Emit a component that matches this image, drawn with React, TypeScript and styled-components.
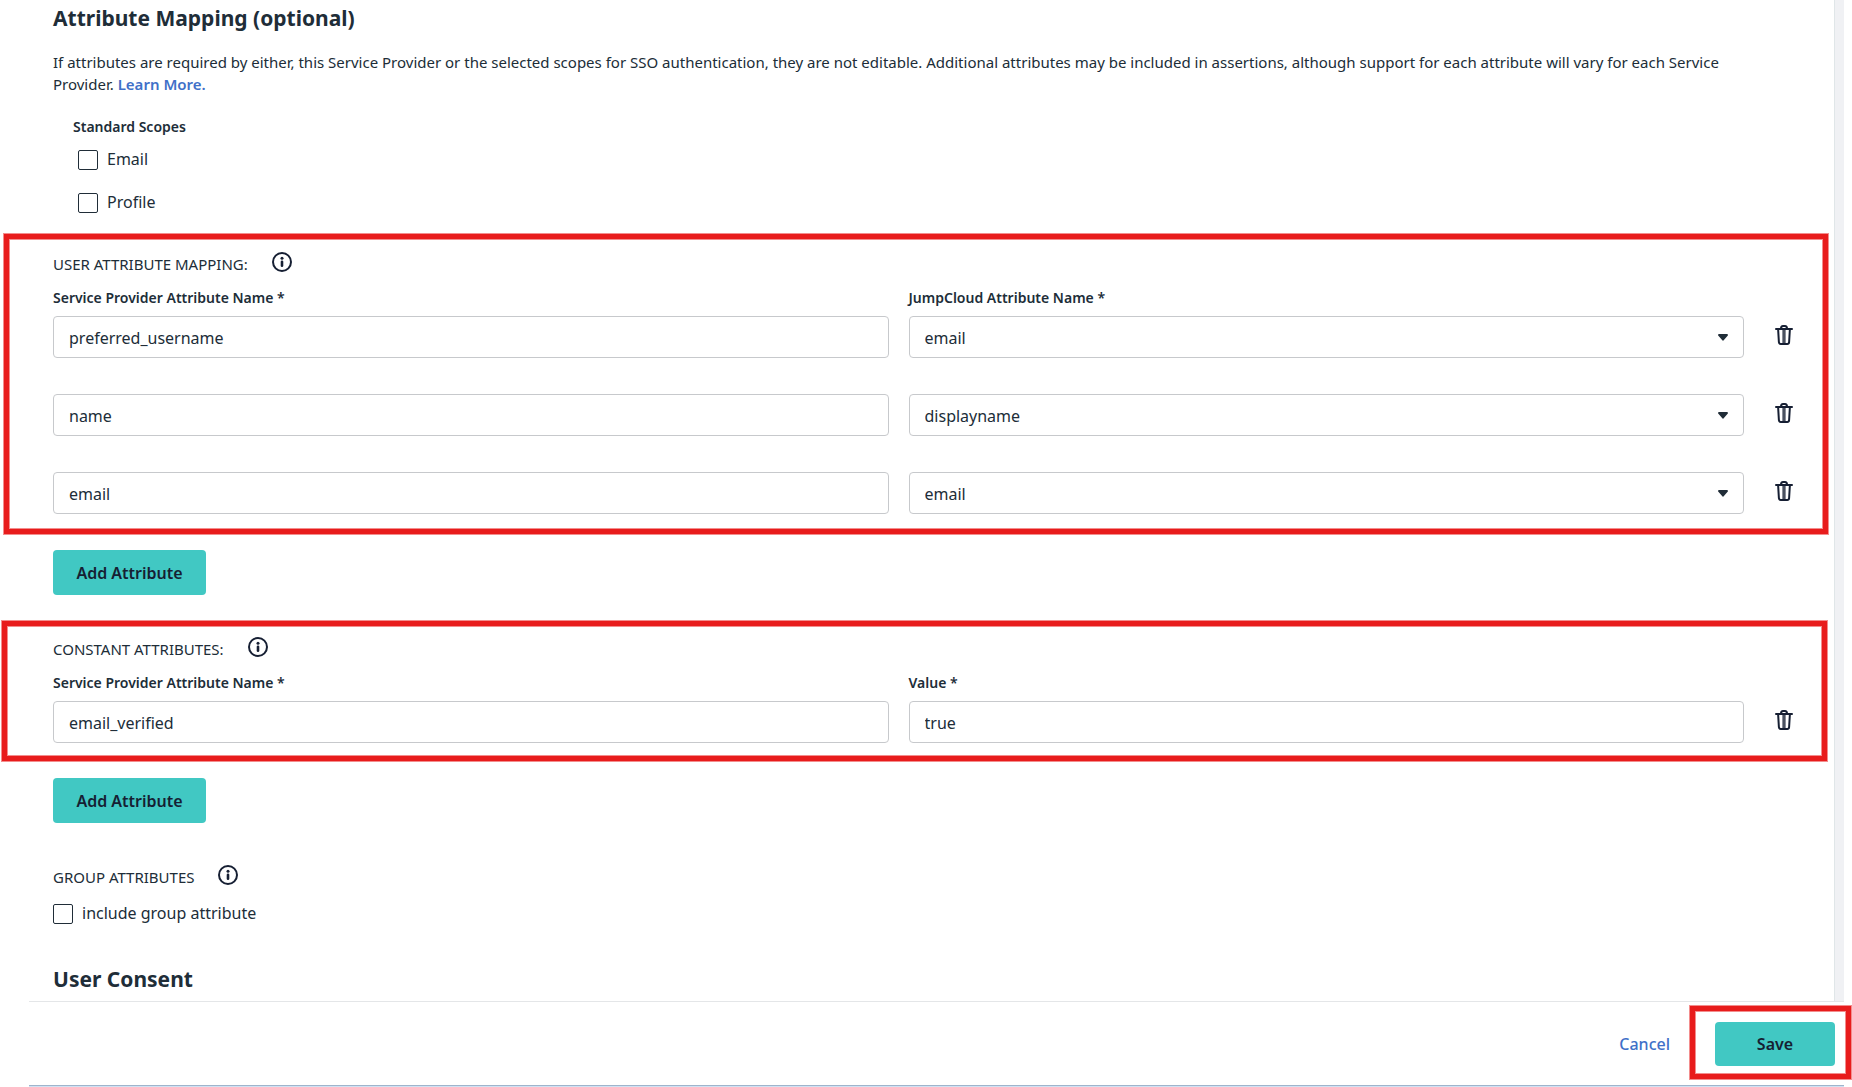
import React, { useId, useState } from "react";
import styled, { createGlobalStyle, css } from "styled-components";

const color = {
  text: "#202d38",
  ink: "#161f33",
  link: "#4070c8",
  teal: "#41c8c3",
  border: "#c7c9cc",
  rule: "#e4e6e8",
  gutter: "#f0f1f4",
  mark: "#e81c1c",
  halo: "rgba(232, 28, 28, 0.5)",
};

const GlobalStyle = createGlobalStyle`
  *, *::before, *::after { box-sizing: border-box; }
  body {
    margin: 0;
    background: #fff;
    color: ${color.text};
    font: 400 15px/22px "Noto Sans", "Open Sans", sans-serif;
  }
  button, input, select { font: inherit; color: inherit; margin: 0; }
`;

const Shell = styled.div`
  display: flex;
  flex-direction: column;
  height: 100vh;
  padding-right: 8px;
  overflow: hidden;
`;

const Scroller = styled.main`
  flex: 1;
  min-height: 0;
  overflow: hidden;
  padding: 4px 30px 0 53px;
  border-right: 1px solid #e0e6e8;
  margin-right: 9px;
  box-shadow: 9px 0 0 ${color.gutter};
`;

const Heading = styled.h2`
  margin: 0;
  font-size: 21px;
  line-height: 28px;
  font-weight: 700;
`;

const Intro = styled.p`
  margin: 19px 0 21px;
  padding-right: 40px;
`;

const TextLink = styled.a`
  color: ${color.link};
  font-weight: 600;
  text-decoration: none;
`;

const Scopes = styled.fieldset`
  display: flex;
  flex-direction: column;
  gap: 20px;
  margin: 0;
  padding: 0 0 0 25px;
  border: 0;
`;

const ScopesTitle = styled.legend`
  margin-left: -5px;
  padding: 0 0 10px;
  font-size: 14px;
  line-height: 22px;
  font-weight: 600;
`;

const CheckLabel = styled.label`
  display: flex;
  align-items: center;
  gap: 9px;
  height: 23px;
  font-size: 16px;
  line-height: 23px;
`;

const CheckBox = styled.input`
  appearance: none;
  width: 20px;
  height: 20px;
  border: 1px solid ${color.text};
  border-radius: 2px;
  background: #fff;
  &:checked {
    background: ${color.teal};
  }
`;

const Section = styled.section<{ $top: number }>`
  position: relative;
  margin-top: ${(p) => p.$top}px;
`;

const SectionTitle = styled.h3`
  display: flex;
  align-items: center;
  gap: 24px;
  margin: 0;
  font-size: 15px;
  line-height: 24px;
  font-weight: 400;
`;

const IconButton = styled.button`
  display: inline-flex;
  align-items: center;
  justify-content: center;
  padding: 0;
  border: 0;
  background: none;
  color: ${color.ink};
  cursor: pointer;
`;

const InfoButton = styled(IconButton)`
  height: 20px;
  margin-bottom: 4px;
`;

const TrashButton = styled(IconButton)`
  width: 40px;
  height: 42px;
  padding-bottom: 4px;
`;

const Rows = styled.div`
  display: flex;
  flex-direction: column;
  gap: 36px;
`;

const Row = styled.div`
  display: grid;
  grid-template-columns: 1fr 1fr 40px;
  column-gap: 20px;
  align-items: end;
`;

const Field = styled.div`
  display: flex;
  flex-direction: column;
  min-width: 0;
`;

const FieldLabel = styled.label`
  margin: 11px 0 7px;
  font-size: 14px;
  line-height: 22px;
  font-weight: 600;
`;

const control = css`
  width: 100%;
  height: 42px;
  padding: 2px 15px 0;
  border: 1px solid ${color.border};
  border-radius: 4px;
  background: #fff;
  font-size: 16px;
`;

const TextInput = styled.input`
  ${control}
`;

const SelectWrap = styled.div`
  position: relative;
`;

const SelectInput = styled.select`
  ${control}
  display: block;
  appearance: none;
`;

const Caret = styled.svg`
  position: absolute;
  right: 16px;
  top: 18px;
  pointer-events: none;
`;

const PrimaryButton = styled.button<{ $size: "add" | "save" }>`
  height: ${(p) => (p.$size === "add" ? 45 : 44)}px;
  min-width: ${(p) => (p.$size === "add" ? 153 : 120)}px;
  padding: 1px 20px 0;
  border: 0;
  border-radius: 4px;
  background: ${color.teal};
  color: ${color.ink};
  font-size: 16px;
  font-weight: 600;
  cursor: pointer;
`;

const AddRow = styled.div<{ $top: number }>`
  display: flex;
  margin-top: ${(p) => p.$top}px;
`;

const Highlight = styled.div<{ $inset: string }>`
  position: absolute;
  inset: ${(p) => p.$inset};
  border: 5px solid ${color.mark};
  box-shadow: 0 0 0 1px ${color.halo}, inset 0 0 0 1px ${color.halo};
  pointer-events: none;
`;

const GroupCheck = styled.div`
  margin-top: 13px;
`;

const ConsentHeading = styled(Heading)`
  margin-top: 40px;
`;

const Footer = styled.footer`
  display: flex;
  align-items: center;
  justify-content: flex-end;
  gap: 45px;
  height: 84px;
  margin-left: 29px;
  padding-right: 9px;
  border-top: 1px solid ${color.rule};
`;

const CancelButton = styled.button`
  padding: 0;
  border: 0;
  background: none;
  color: ${color.link};
  font-size: 16px;
  font-weight: 500;
  cursor: pointer;
`;

const SaveWrap = styled.div`
  position: relative;
`;

const BottomEdge = styled.div`
  height: 2px;
  margin-left: 29px;
  border-top: 1px solid #9fb4cc;
  background: #cfe2f3;
`;

const Info = ({ label }: { label: string }) => (
  <InfoButton type="button" aria-label={label}>
    <svg width="20" height="20" viewBox="0 0 20 20" fill="none">
      <circle cx="10" cy="10" r="9" stroke="currentColor" strokeWidth="2" />
      <circle cx="10" cy="6.2" r="1.5" fill="currentColor" />
      <path d="M10 9.8V13.8" stroke="currentColor" strokeWidth="2.6" strokeLinecap="round" />
    </svg>
  </InfoButton>
);

const Trash = () => (
  <TrashButton type="button" aria-label="Delete attribute">
    <svg width="18" height="20" viewBox="0 0 18 20" fill="none" stroke="currentColor">
      <path d="M1 4H17" strokeWidth="2" strokeLinecap="round" />
      <path d="M6 3.6C6 1.9 7 1 8 1H10C11 1 12 1.9 12 3.6" strokeWidth="2" />
      <path d="M3.1 4L3.9 17.2C4 18.4 4.7 19 5.7 19H12.3C13.3 19 14 18.4 14.1 17.2L14.9 4" strokeWidth="2" />
      <path d="M9 4V19" strokeWidth="3" />
      <path d="M9 5V18" stroke="#fff" strokeWidth="1" opacity="0.45" />
    </svg>
  </TrashButton>
);

type TextFieldProps = { label?: string; name: string; initial: string };

const TextField = ({ label, name, initial }: TextFieldProps) => {
  const id = useId();
  const [value, setValue] = useState(initial);
  return (
    <Field>
      {label && <FieldLabel htmlFor={id}>{label}</FieldLabel>}
      <TextInput
        id={id}
        aria-label={label ? undefined : name}
        value={value}
        onChange={(e) => setValue(e.target.value)}
      />
    </Field>
  );
};

const SelectField = ({ label, name, initial }: TextFieldProps) => {
  const id = useId();
  return (
    <Field>
      {label && <FieldLabel htmlFor={id}>{label}</FieldLabel>}
      <SelectWrap>
        <SelectInput id={id} aria-label={label ? undefined : name} defaultValue={initial}>
          <option>email</option>
          <option>displayname</option>
        </SelectInput>
        <Caret width="10" height="7" viewBox="0 0 10 7">
          <path
            d="M1 0H9C9.9 0 10.3 1 9.6 1.7L5.9 6.1C5.4 6.8 4.6 6.8 4.1 6.1L0.4 1.7C-0.3 1 0.1 0 1 0Z"
            fill={color.text}
          />
        </Caret>
      </SelectWrap>
    </Field>
  );
};

const Check = ({ children }: { children: React.ReactNode }) => (
  <CheckLabel>
    <CheckBox type="checkbox" />
    {children}
  </CheckLabel>
);

const mappings = [
  { provider: "preferred_username", jumpcloud: "email" },
  { provider: "name", jumpcloud: "displayname" },
  { provider: "email", jumpcloud: "email" },
];

const PROVIDER = "Service Provider Attribute Name *";
const JUMPCLOUD = "JumpCloud Attribute Name *";

export default function App() {
  return (
    <Shell>
      <GlobalStyle />
      <Scroller>
        <Heading>Attribute Mapping (optional)</Heading>
        <Intro>
          If attributes are required by either, this Service Provider or the selected scopes for SSO
          authentication, they are not editable. Additional attributes may be included in
          assertions, although support for each attribute will vary for each Service Provider.{" "}
          <TextLink href="#learn-more">Learn More.</TextLink>
        </Intro>

        <Scopes>
          <ScopesTitle>Standard Scopes</ScopesTitle>
          <Check>Email</Check>
          <Check>Profile</Check>
        </Scopes>

        <Section $top={38}>
          <SectionTitle>
            USER ATTRIBUTE MAPPING: <Info label="About user attribute mapping" />
          </SectionTitle>
          <Rows>
            {mappings.map((m, i) => (
              <Row key={i}>
                <TextField label={i === 0 ? PROVIDER : undefined} name={PROVIDER} initial={m.provider} />
                <SelectField label={i === 0 ? JUMPCLOUD : undefined} name={JUMPCLOUD} initial={m.jumpcloud} />
                <Trash />
              </Row>
            ))}
          </Rows>
          <Highlight $inset="-18px -24px -20px -49px" />
        </Section>
        <AddRow $top={36}>
          <PrimaryButton type="button" $size="add">Add Attribute</PrimaryButton>
        </AddRow>

        <Section $top={42}>
          <SectionTitle>
            CONSTANT ATTRIBUTES: <Info label="About constant attributes" />
          </SectionTitle>
          <Row>
            <TextField label={PROVIDER} name={PROVIDER} initial="email_verified" />
            <TextField label="Value *" name="Value" initial="true" />
            <Trash />
          </Row>
          <Highlight $inset="-16px -23px -18px -51px" />
        </Section>
        <AddRow $top={35}>
          <PrimaryButton type="button" $size="add">Add Attribute</PrimaryButton>
        </AddRow>

        <Section $top={42}>
          <SectionTitle>
            GROUP ATTRIBUTES <Info label="About group attributes" />
          </SectionTitle>
          <GroupCheck>
            <Check>include group attribute</Check>
          </GroupCheck>
        </Section>

        <ConsentHeading>User Consent</ConsentHeading>
      </Scroller>

      <Footer>
        <CancelButton type="button">Cancel</CancelButton>
        <SaveWrap>
          <PrimaryButton type="button" $size="save">Save</PrimaryButton>
          <Highlight $inset="-16px -16px -13px -25px" />
        </SaveWrap>
      </Footer>
      <BottomEdge />
    </Shell>
  );
}
